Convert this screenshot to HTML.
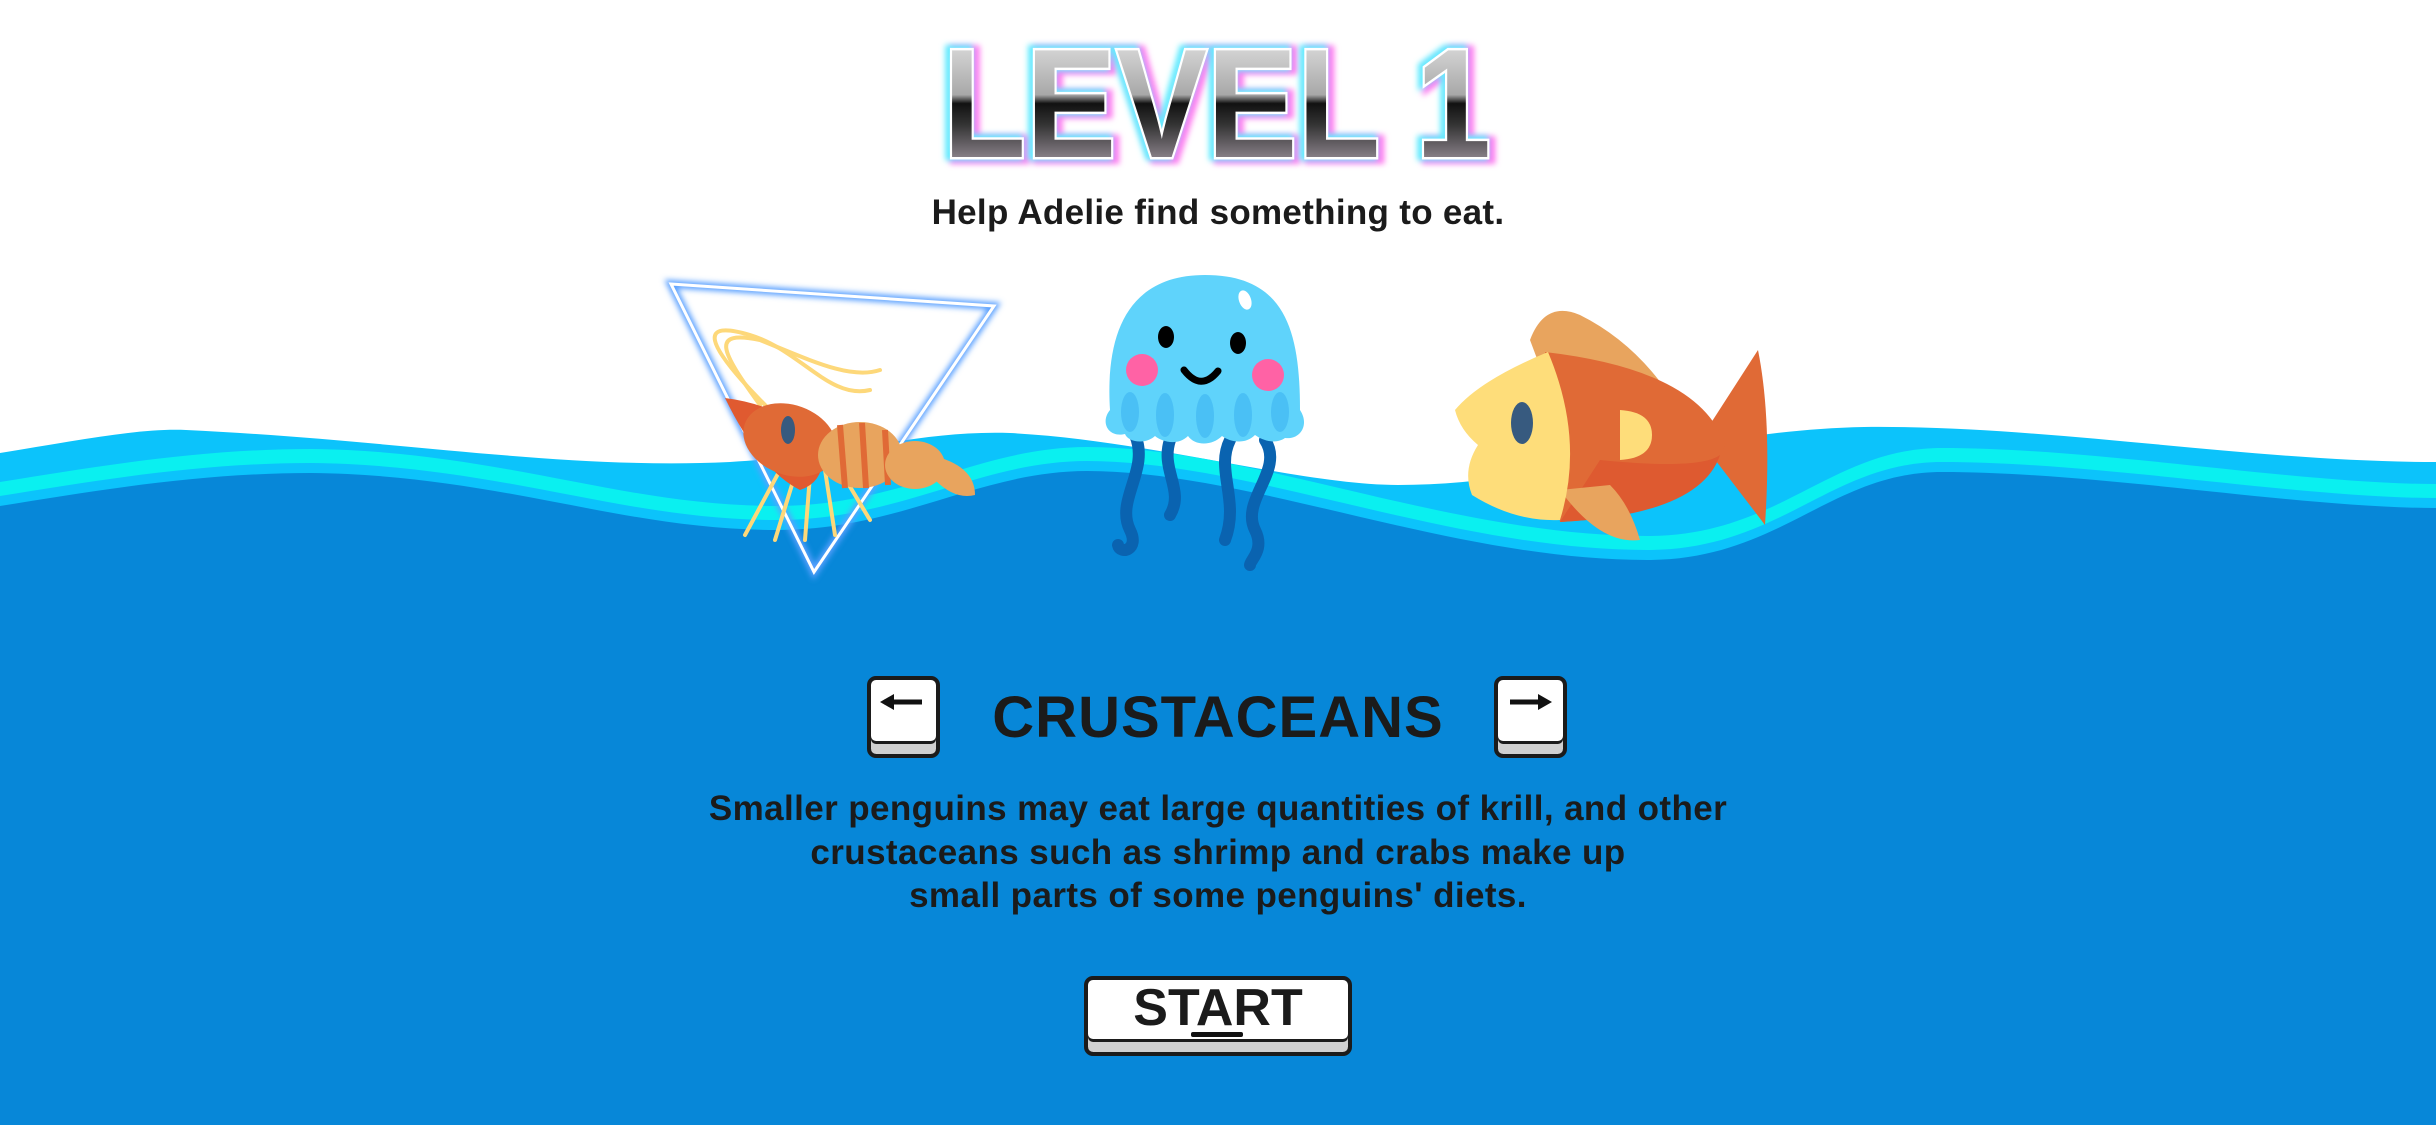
<!DOCTYPE html>
<html><head><meta charset="utf-8"><style>
html,body{margin:0;padding:0;width:2436px;height:1125px;overflow:hidden;background:#fff;font-family:"Liberation Sans",Arial,sans-serif;}
.abs{position:absolute;}
.t{position:absolute;left:0;width:2436px;text-align:center;color:#1b1b1b;font-weight:bold;}
.key{position:absolute;background:#fff;border:4px solid #1b1b1b;border-radius:9px;box-sizing:border-box;box-shadow:inset 0 -10px 0 #d0d0d0, inset 0 -13px 0 #1b1b1b;}
</style></head><body>
<svg class="abs" style="left:0;top:0" width="2436" height="1125" viewBox="0 0 2436 1125">
<defs>
<linearGradient id="chrome" x1="0" y1="0" x2="0" y2="1">
<stop offset="0" stop-color="#f2f2f2"/><stop offset="0.45" stop-color="#a8a8a8"/><stop offset="0.5" stop-color="#111"/><stop offset="0.62" stop-color="#333"/><stop offset="1" stop-color="#d8c8d8"/>
</linearGradient>
<filter id="glow" x="-20%" y="-20%" width="140%" height="140%"><feGaussianBlur stdDeviation="3"/></filter>
</defs>
<!-- title -->
<g transform="translate(0,158) scale(1,1) translate(0,-158)">
<text x="946" y="158" textLength="548" lengthAdjust="spacingAndGlyphs" font-family="Liberation Sans" font-weight="bold" font-size="155" fill="none" stroke="#ff7cf0" stroke-width="12" filter="url(#glow)">LEVEL 1</text>
<text x="940" y="156" textLength="548" lengthAdjust="spacingAndGlyphs" font-family="Liberation Sans" font-weight="bold" font-size="155" fill="none" stroke="#5ef0ff" stroke-width="9" filter="url(#glow)">LEVEL 1</text>
<text x="943" y="157" textLength="548" lengthAdjust="spacingAndGlyphs" font-family="Liberation Sans" font-weight="bold" font-size="155" fill="url(#chrome)" stroke="#fff" stroke-width="5" paint-order="stroke">LEVEL 1</text>
</g>

<!-- waves -->
<path fill="#0cc3fb" d="M0,453 C80,440 140,428 186,430 C400,440 560,470 730,462 C850,455 920,430 1010,433 C1150,440 1300,485 1398,485 C1550,485 1700,430 1864,427 C2050,425 2250,462 2436,462 L2436,1125 L0,1125Z"/>
<g transform="translate(0,-24)"><path fill="#0af0f0" d="M0,506 C100,490 200,473 311,473 C500,475 620,530 777,530 C900,530 980,471 1087,471 C1250,471 1450,560 1647,560 C1780,560 1830,472 1942,472 C2100,472 2300,508 2436,508 L2436,1125 L0,1125Z"/></g>
<g transform="translate(0,-10)"><path fill="#0cc3fb" d="M0,506 C100,490 200,473 311,473 C500,475 620,530 777,530 C900,530 980,471 1087,471 C1250,471 1450,560 1647,560 C1780,560 1830,472 1942,472 C2100,472 2300,508 2436,508 L2436,1125 L0,1125Z"/></g>
<path fill="#0787d8" d="M0,506 C100,490 200,473 311,473 C500,475 620,530 777,530 C900,530 980,471 1087,471 C1250,471 1450,560 1647,560 C1780,560 1830,472 1942,472 C2100,472 2300,508 2436,508 L2436,1125 L0,1125Z"/>

<!-- triangle -->
<polygon points="671,284 994,306 814,572" fill="none" stroke="#5aa0ff" stroke-width="8" filter="url(#glow)"/>
<polygon points="671,284 994,306 814,572" fill="none" stroke="#fff" stroke-width="3"/>
<!-- shrimp -->
<g fill="none" stroke="#fdd87a" stroke-width="4" stroke-linecap="round">
<path d="M770,410 C700,340 700,320 750,335 C800,350 830,400 870,390"/>
<path d="M760,405 C720,350 710,330 760,340 C810,360 850,380 880,370"/>
<path d="M780,470 L745,535"/><path d="M795,475 L775,540"/><path d="M810,475 L805,540"/><path d="M825,470 L835,535"/><path d="M840,470 L870,520"/>
</g>
<path d="M725,398 Q780,405 820,440 Q830,480 800,490 Q760,470 725,398Z" fill="#e05a30"/>
<ellipse cx="790" cy="440" rx="48" ry="35" fill="#e06a36" transform="rotate(20 790 440)"/>
<ellipse cx="788" cy="430" rx="7" ry="14" fill="#375a7f"/>
<ellipse cx="860" cy="455" rx="42" ry="33" fill="#e8a45e"/>
<path d="M840,425 L845,488 M862,423 L866,488 M885,430 L888,485" stroke="#e06a36" stroke-width="6"/>
<ellipse cx="915" cy="465" rx="30" ry="24" fill="#e8a45e"/>
<path d="M930,455 Q975,465 975,495 Q955,500 935,480Z" fill="#e8a45e"/>

<!-- jellyfish -->
<g>
<g fill="none" stroke="#0a63b0" stroke-width="12" stroke-linecap="round">
<path d="M1135,435 C1150,470 1115,500 1130,530 C1140,550 1120,555 1118,545"/>
<path d="M1170,440 C1160,470 1185,490 1170,515"/>
<path d="M1230,440 C1215,470 1240,500 1225,540"/>
<path d="M1265,440 C1285,470 1240,500 1255,530 C1265,550 1250,560 1250,565"/>
</g>
<path d="M1110,410 C1105,330 1130,275 1205,275 C1285,275 1300,330 1300,410 C1310,425 1300,440 1285,438 C1275,445 1262,440 1255,435 C1245,445 1230,442 1222,436 C1212,446 1195,446 1188,436 C1178,446 1162,442 1155,436 C1145,445 1128,442 1125,434 C1108,438 1100,422 1110,410Z" fill="#5fd3fb"/>
<g fill="#4ac0f5"><ellipse cx="1130" cy="412" rx="9" ry="20"/><ellipse cx="1165" cy="415" rx="9" ry="22"/><ellipse cx="1205" cy="416" rx="9" ry="22"/><ellipse cx="1243" cy="415" rx="9" ry="22"/><ellipse cx="1280" cy="412" rx="9" ry="20"/></g>
<ellipse cx="1245" cy="300" rx="6" ry="10" fill="#fff" transform="rotate(-20 1245 300)"/>
<ellipse cx="1166" cy="337" rx="8" ry="11" fill="#000"/>
<ellipse cx="1238" cy="343" rx="8" ry="11" fill="#000"/>
<circle cx="1142" cy="370" r="16" fill="#ff62a5"/>
<circle cx="1268" cy="375" r="16" fill="#ff62a5"/>
<path d="M1184,370 Q1201,392 1218,371" fill="none" stroke="#000" stroke-width="7" stroke-linecap="round"/>
</g>

<!-- fish -->
<path d="M1530,340 Q1545,300 1580,315 Q1650,350 1690,430 L1560,420 Z" fill="#e8a45e"/>
<path d="M1700,440 L1758,350 Q1772,420 1765,525 Z" fill="#e06a36"/>
<path d="M1545,352 Q1700,370 1725,445 Q1700,515 1560,522 Z" fill="#e06a36"/>
<path d="M1600,460 Q1700,470 1720,455 Q1700,515 1560,522 Z" fill="#de5a30"/>
<path d="M1560,490 Q1600,545 1640,540 Q1630,505 1610,485 Z" fill="#e8a45e"/>
<path d="M1548,352 Q1480,380 1455,410 Q1460,430 1478,445 Q1462,470 1472,495 Q1515,522 1560,520 Q1585,440 1548,352Z" fill="#fedd7a"/>
<ellipse cx="1522" cy="423" rx="11" ry="21" fill="#375a7f"/>
<path d="M1620,410 Q1652,412 1652,435 Q1652,458 1620,460Z" fill="#fedd7a"/>
</svg>

<div class="t" style="top:193px;font-size:35px;letter-spacing:0.3px;">Help Adelie find something to eat.</div>

<div class="key" style="left:867px;top:676px;width:73px;height:82px;"></div>
<svg class="abs" style="left:878px;top:690px" width="50" height="24"><path d="M6,12 L44,12" stroke="#111" stroke-width="5"/><path d="M2,12 L16,4 L16,20Z" fill="#111"/></svg>
<div class="key" style="left:1494px;top:676px;width:73px;height:82px;"></div>
<svg class="abs" style="left:1506px;top:690px" width="50" height="24"><path d="M4,12 L40,12" stroke="#111" stroke-width="5"/><path d="M46,12 L32,4 L32,20Z" fill="#111"/></svg>

<div class="t" style="top:684px;font-size:58px;letter-spacing:1px;">CRUSTACEANS</div>

<div class="t" style="top:787px;font-size:35px;line-height:43.5px;letter-spacing:0.4px;">Smaller penguins may eat large quantities of krill, and other<br>crustaceans such as shrimp and crabs make up<br>small parts of some penguins' diets.</div>

<div class="key" style="left:1084px;top:976px;width:268px;height:80px;"></div>
<div class="t" style="top:978px;font-size:52px;">START</div>
<div class="abs" style="left:1191px;top:1032px;width:52px;height:5px;background:#111;border-radius:2px;"></div>
</body></html>
